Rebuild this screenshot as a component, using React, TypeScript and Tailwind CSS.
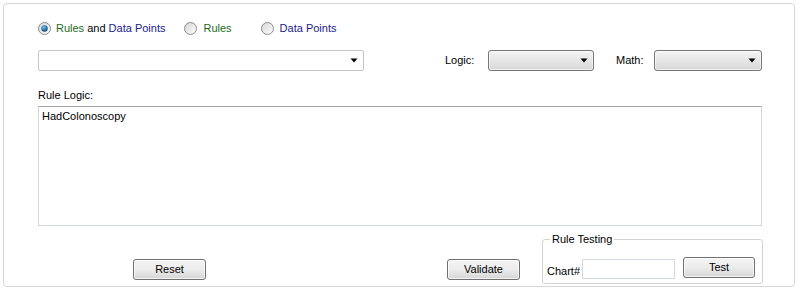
import React from "react";

const font = { fontFamily: '"Liberation Sans", Arial, sans-serif' };

function Radio({ checked, id }: { checked?: boolean; id: string }) {
  return (
    <svg width="13" height="13" viewBox="0 0 13 13" className="shrink-0">
      <defs>
        <linearGradient id={`rb-${id}`} x1="0" y1="0" x2="1" y2="1">
          <stop offset="0" stopColor="#d4d4d4" />
          <stop offset="1" stopColor="#ffffff" />
        </linearGradient>
        <radialGradient id={`rd-${id}`} cx="0.4" cy="0.35" r="0.7">
          <stop offset="0" stopColor="#7fc0ea" />
          <stop offset="0.5" stopColor="#2f7fb8" />
          <stop offset="1" stopColor="#123f63" />
        </radialGradient>
      </defs>
      <circle cx="6.5" cy="6.5" r="6" fill={`url(#rb-${id})`} stroke="#8c8c8c" strokeWidth="1" />
      {checked && <circle cx="6.5" cy="6.5" r="3.2" fill={`url(#rd-${id})`} />}
    </svg>
  );
}

function Arrow() {
  return (
    <svg width="8" height="5" viewBox="0 0 8 5" className="shrink-0">
      <path d="M0.5 0.5 H7.5 L4 4.5 Z" fill="#000" />
    </svg>
  );
}

function GrayCombo({ w }: { w: string }) {
  return (
    <div
      className={`${w} h-[21px] border border-[#767676] rounded-[3px] bg-linear-to-b from-[#f4f4f4] to-[#d8d8d8] flex items-center justify-end pr-[5px] shadow-[inset_0_0_0_1px_rgba(255,255,255,0.6)]`}
    >
      <Arrow />
    </div>
  );
}

function Button({ label, w, h }: { label: string; w: string; h: string }) {
  return (
    <div
      className={`${w} ${h} border border-[#707070] rounded-[3px] bg-linear-to-b from-[#f4f4f4] via-[#ececec] to-[#d6d6d6] flex items-center justify-center text-[11px] leading-[13px] text-black shadow-[inset_0_0_0_1px_rgba(255,255,255,0.7)]`}
    >
      {label}
    </div>
  );
}

export default function App() {
  return (
    <div className="w-[801px] h-[291px] bg-white p-[3px] text-black" style={font}>
      <div className="w-[792px] h-[284px] border border-[#d6d6d6] rounded-[4px] pl-[34px] flex flex-col">
        {/* radio row */}
        <div className="mt-[18px] h-[13px] flex items-center text-[11px] leading-[13px]">
          <Radio checked id="a" />
          <span className="ml-[5px]">
            <span className="text-[#1d6b1d]">Rules</span>{" "}
            <span>and</span>{" "}
            <span className="text-[#1b1b8c]">Data Points</span>
          </span>
          <div className="ml-[19px] flex items-center">
            <Radio id="b" />
            <span className="ml-[6px] text-[#1d6b1d]">Rules</span>
          </div>
          <div className="ml-[29px] flex items-center">
            <Radio id="c" />
            <span className="ml-[6px] text-[#1b1b8c]">Data Points</span>
          </div>
        </div>

        {/* dropdown row */}
        <div className="mt-[15px] h-[21px] flex items-center text-[11px] leading-[13px]">
          <div className="w-[326px] h-[21px] border border-[#c6c6c6] rounded-[2px] bg-white flex items-center justify-end pr-[5px]">
            <Arrow />
          </div>
          <div className="ml-[81px] w-[43px]">Logic:</div>
          <GrayCombo w="w-[106px]" />
          <div className="ml-[22px] w-[38px]">Math:</div>
          <GrayCombo w="w-[108px]" />
        </div>

        {/* rule logic */}
        <div className="mt-[18px] h-[13px] text-[11px] leading-[13px]">Rule Logic:</div>
        <div className="mt-[4px] w-[724px] h-[120px] border border-[#d3d9de] border-t-[#a3a3a3] bg-white pl-[3px] pt-[3px] text-[11px] leading-[13px]">
          HadColonoscopy
        </div>

        {/* bottom row */}
        <div className="mt-[7px] flex items-start text-[11px] leading-[13px]">
          <div className="mt-[26px] ml-[95px]">
            <Button label="Reset" w="w-[73px]" h="h-[21px]" />
          </div>
          <div className="mt-[26px] ml-[241px]">
            <Button label="Validate" w="w-[73px]" h="h-[21px]" />
          </div>
          <fieldset className="ml-[22px] w-[221px] h-[51px] border border-[#d3d3d3] rounded-[3px] px-0 pb-0 m-0 min-w-0">
            <legend className="ml-[7px] px-[2px] text-[11px] leading-[13px]">Rule Testing</legend>
            <div className="flex items-start pl-[4px]">
              <span className="mt-[19px]">Chart#</span>
              <div className="ml-[2px] mt-[13px] w-[93px] h-[20px] border border-[#d3d9de] bg-white" />
              <div className="ml-[8px] mt-[11px]">
                <Button label="Test" w="w-[72px]" h="h-[21px]" />
              </div>
            </div>
          </fieldset>
        </div>
      </div>
    </div>
  );
}
